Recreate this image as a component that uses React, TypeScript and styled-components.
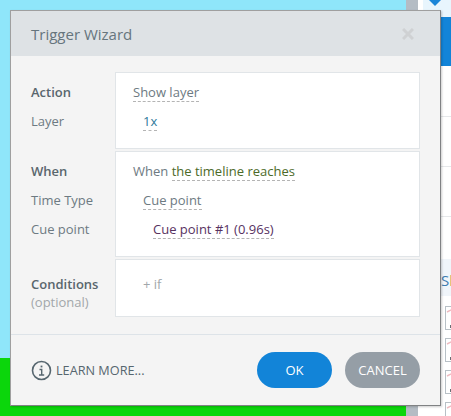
import React from 'react'
import styled, { createGlobalStyle } from 'styled-components'

const GlobalStyle = createGlobalStyle`
  html, body {
    margin: 0;
    padding: 0;
    overflow: hidden;
  }
  body {
    font-family: "Open Sans", "Noto Sans", "Liberation Sans", sans-serif;
  }
`

const Page = styled.div`
  position: relative;
  display: flex;
  width: 451px;
  height: 416px;
  overflow: hidden;
  background: #fff;
`

const Stage = styled.div`
  display: flex;
  flex-direction: column;
  width: 406px;
`

const StageSky = styled.div`
  height: 358px;
  background: #8fe6fa;
`

const StageGrass = styled.div`
  flex: 1;
  background: #0bd60b;
`

const Scrollbar = styled.div`
  width: 12px;
  background: #b4bcc4;
`

const Side = styled.div`
  display: flex;
  flex-direction: column;
  width: 28px;
  margin-left: 5px;

  > * {
    flex: none;
  }
`

const SideTop = styled.div`
  display: flex;
  justify-content: center;
  height: 17px;
  background: #e8f5fd;
`

const SideArrow = styled.svg`
  width: 12px;
  height: 6px;
  margin-left: -4px;
  fill: #1a85d8;
`

const SideBlue = styled.div`
  height: 49px;
  margin-bottom: 1px;
  background: #1284d8;
`

const SideRow = styled.div`
  height: 49px;
  border-bottom: 1px solid #e6e8ea;
`

const SideHeading = styled.div`
  height: 37px;
  margin-top: 42px;
  padding-left: 18px;
  background: #f0f5fa;
  font-size: 15px;
  line-height: 42px;
  color: #3d7cb0;
  white-space: nowrap;
  overflow: hidden;
`

const SideHeadingTail = styled.span`
  color: #c89a5a;
`

const ThumbList = styled.div`
  display: flex;
  flex-direction: column;
  gap: 8px;
  margin-top: 10px;
  padding-left: 22px;
`

const Thumb = styled.div`
  flex: none;
  width: 20px;
  height: 22px;
  background: #fff;
  border: 1px solid #b8c0c6;
`

const ThumbGlyph = styled.svg`
  display: block;
  width: 20px;
  height: 22px;
`

const Dialog = styled.div`
  position: absolute;
  top: 10px;
  left: 10px;
  box-sizing: border-box;
  width: 431px;
  height: 396px;
  display: flex;
  flex-direction: column;
  background: #f4f4f4;
  border: 1px solid #9f9f9f;
  border-right-color: #808284;
  border-bottom-color: #808284;
  box-shadow: 1px 1px 2px rgba(0, 0, 0, 0.2);
`

const Header = styled.div`
  display: flex;
  align-items: center;
  justify-content: space-between;
  height: 45px;
  padding: 0 26px 0 20px;
  box-sizing: border-box;
  background: #dee2e5;
`

const Title = styled.h1`
  margin: 0;
  font-size: 15px;
  font-weight: 400;
  color: #66757d;
`

const CloseIcon = styled.svg`
  width: 12px;
  height: 12px;
  stroke: #cfd1d3;
  stroke-width: 3;
  fill: none;
`

const Sections = styled.div`
  flex: 1;
  display: flex;
  flex-direction: column;
  gap: 2px;
  padding: 16px 20px 0 20px;
`

const Section = styled.div<{ $height: number }>`
  display: flex;
  height: ${({ $height }) => $height}px;
`

const Labels = styled.div<{ $top?: number }>`
  display: flex;
  flex-direction: column;
  width: 84px;
  padding-top: ${({ $top }) => $top ?? 9}px;
`

const Panel = styled.div`
  flex: 1;
  box-sizing: border-box;
  padding-top: 8px;
  padding-left: 17px;
  background: #fff;
  border: 1px solid #e1e5e8;
`

const Label = styled.div<{ $strong?: boolean; $muted?: boolean }>`
  height: 29px;
  font-size: 13px;
  line-height: 22px;
  font-weight: ${({ $strong }) => ($strong ? 600 : 400)};
  color: ${({ $strong, $muted }) => ($muted ? '#a2a7aa' : $strong ? '#59666d' : '#6d7a82')};
`

const OptionalLabel = styled(Label)`
  margin-top: -9px;
`

const Line = styled.div<{ $indent?: number }>`
  height: 29px;
  padding-left: ${({ $indent }) => $indent ?? 0}px;
  font-size: 13px;
  line-height: 22px;
  color: #6d7a82;
`

const Token = styled.span<{ $color: string }>`
  display: inline-block;
  height: 20px;
  border-bottom: 1px dashed #b4b4b4;
  color: ${({ $color }) => $color};
`

const AddIf = styled(Line)`
  padding-top: 5px;
  color: #a2a7aa;
`

const Footer = styled.div`
  display: flex;
  align-items: center;
  justify-content: space-between;
  height: 71px;
  box-sizing: border-box;
  padding: 0 20px;
  border-top: 1px solid #dde3e8;
`

const LearnMore = styled.a`
  display: flex;
  align-items: center;
  gap: 4px;
  font-size: 12.7px;
  color: #56666f;
`

const InfoIcon = styled.svg`
  width: 21px;
  height: 21px;
  fill: none;
  stroke: #56666f;
`

const Actions = styled.div`
  display: flex;
  gap: 13px;
`

const Button = styled.button<{ $primary?: boolean }>`
  width: 75px;
  height: 36px;
  padding: 0;
  border: none;
  border-radius: 18px;
  font-family: inherit;
  font-size: 13px;
  color: #fff;
  background: ${({ $primary }) => ($primary ? '#1284d8' : '#959ea6')};
`

const thumbs = [0, 1, 2, 3]

export default function App() {
  return (
    <Page>
      <GlobalStyle />
      <Stage>
        <StageSky />
        <StageGrass />
      </Stage>
      <Scrollbar />
      <Side>
        <SideTop>
          <SideArrow viewBox="0 0 12 6">
            <path d="M0 0h12L6 6z" />
          </SideArrow>
        </SideTop>
        <SideBlue />
        <SideRow />
        <SideRow />
        <SideRow />
        <SideHeading>
          S<SideHeadingTail>l</SideHeadingTail>
        </SideHeading>
        <ThumbList>
          {thumbs.map((id) => (
            <Thumb key={id}>
              <ThumbGlyph viewBox="0 0 20 22">
                <path d="M1 5l4-2 2 1" stroke="#eebbc0" strokeWidth="1.5" fill="none" />
                <rect x="4" y="18" width="2" height="3" fill="#6a6f74" />
              </ThumbGlyph>
            </Thumb>
          ))}
        </ThumbList>
      </Side>

      <Dialog>
        <Header>
          <Title>Trigger Wizard</Title>
          <CloseIcon viewBox="0 0 12 12">
            <path d="M1 1l10 10M11 1L1 11" />
          </CloseIcon>
        </Header>

        <Sections>
          <Section $height={77}>
            <Labels>
              <Label $strong>Action</Label>
              <Label>Layer</Label>
            </Labels>
            <Panel>
              <Line>
                <Token $color="#6d7a82">Show layer</Token>
              </Line>
              <Line $indent={10}>
                <Token $color="#2e7a9c">1x</Token>
              </Line>
            </Panel>
          </Section>

          <Section $height={106}>
            <Labels>
              <Label $strong>When</Label>
              <Label>Time Type</Label>
              <Label>Cue point</Label>
            </Labels>
            <Panel>
              <Line>
                When <Token $color="#4c6a28">the timeline reaches</Token>
              </Line>
              <Line $indent={10}>
                <Token $color="#6d7a82">Cue point</Token>
              </Line>
              <Line $indent={20}>
                <Token $color="#57325f">Cue point #1 (0.96s)</Token>
              </Line>
            </Panel>
          </Section>

          <Section $height={58}>
            <Labels $top={14}>
              <Label $strong>Conditions</Label>
              <OptionalLabel $muted>(optional)</OptionalLabel>
            </Labels>
            <Panel>
              <AddIf $indent={10}>+ if</AddIf>
            </Panel>
          </Section>
        </Sections>

        <Footer>
          <LearnMore>
            <InfoIcon viewBox="0 0 21 21">
              <circle cx="10.5" cy="10.5" r="9" strokeWidth="1.6" />
              <path d="M8.5 9.5h2.2v5.5M8 15h5.2" strokeWidth="1.4" />
              <path d="M10.5 5.6v1.8" strokeWidth="1.8" />
            </InfoIcon>
            LEARN MORE...
          </LearnMore>
          <Actions>
            <Button $primary>OK</Button>
            <Button>CANCEL</Button>
          </Actions>
        </Footer>
      </Dialog>
    </Page>
  )
}
